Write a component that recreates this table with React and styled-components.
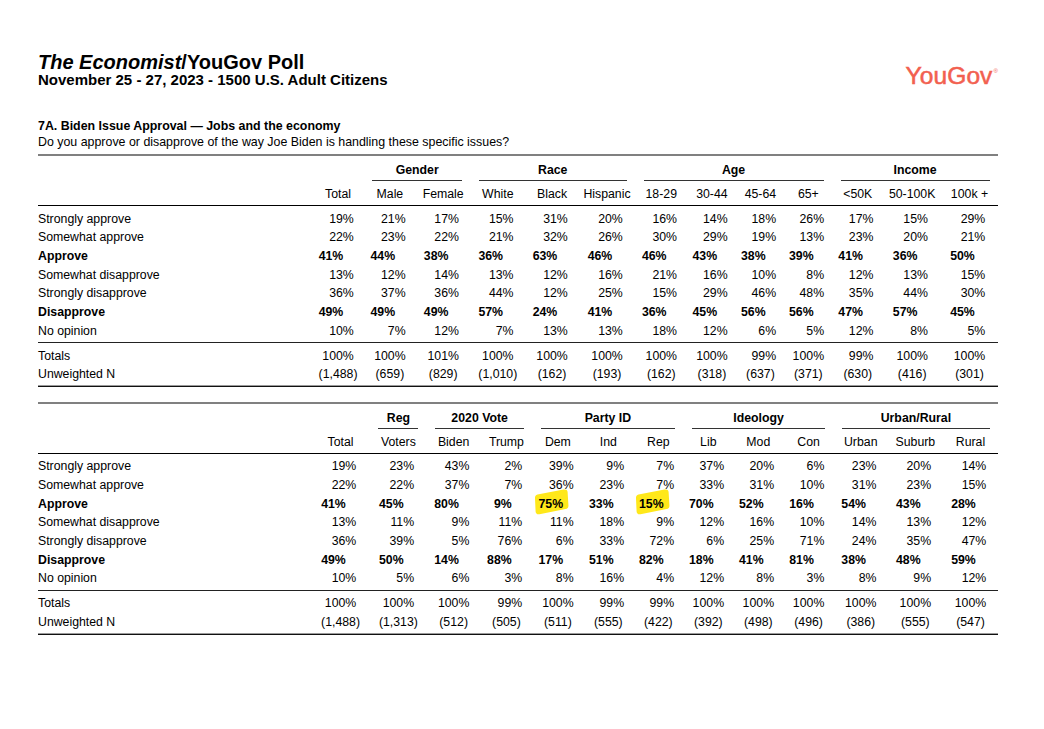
import React from 'react';
import styled, { createGlobalStyle, css } from 'styled-components';

const GlobalStyle = createGlobalStyle`
  html, body { margin: 0; padding: 0; background: #fff; }
  body { font-family: "Liberation Sans", Arial, Helvetica, sans-serif; color: #000; }
`;

const Page = styled.div`
  width: 1044px;
  height: 729px;
  box-sizing: border-box;
  padding: 52px 46px 0 38px;
  isolation: isolate;
  overflow: hidden;
`;

const Header = styled.header`
  display: flex;
  justify-content: space-between;
  align-items: flex-start;
`;

const Title = styled.h1`
  margin: 0;
  font-size: 20px;
  line-height: 20px;
  font-weight: 700;
  white-space: nowrap;
`;

const Subtitle = styled.div`
  font-size: 15px;
  line-height: 15px;
  font-weight: 700;
  white-space: nowrap;
`;

const Logo = styled.div`
  display: flex;
  align-items: flex-start;
  margin-top: 12px;
  color: #f2604f;
  font-size: 24.5px;
  line-height: 23px;
  letter-spacing: 0.1px;
  -webkit-text-stroke: 0.55px #f2604f;
`;

const LogoReg = styled.span`
  font-size: 6px;
  line-height: 6px;
  margin: 4px 0 0 1px;
  -webkit-text-stroke: 0;
`;

const Section = styled.section`
  margin-top: 31px;
`;

const SectionTitle = styled.h2`
  margin: 0;
  font-size: 12.4px;
  line-height: 16px;
  font-weight: 700;
`;

const Question = styled.p`
  margin: 0 0 4px;
  font-size: 12.4px;
  line-height: 16px;
`;

const Grid = styled.div`
  display: grid;
  grid-template-columns: minmax(0, 1fr) ${(p) => p.$widths.map((w) => `${w}px`).join(' ')};
  border-top: 2px solid #808080;
  font-size: 12.3px;
  margin-top: ${(p) => p.$gap || 0}px;
`;

const Blank = styled.div`
  grid-column: span ${(p) => p.$span || 1};
`;

const GroupHead = styled.div`
  grid-column: span ${(p) => p.$span};
  margin: 0 8.5px;
  padding: 5px 0 1px;
  border-bottom: 1px solid #333;
  text-align: center;
  font-weight: 700;
  line-height: 18px;
  white-space: nowrap;
`;

const ColHead = styled.div`
  padding: 4px 0 2px;
  line-height: 18px;
  text-align: center;
  white-space: nowrap;
`;

const Rule = styled.div`
  grid-column: 1 / -1;
  height: 0;
  ${(p) =>
    p.$kind === 'head' &&
    css`
      border-top: 1px solid #000;
      margin-bottom: 3.67px;
    `}
  ${(p) =>
    p.$kind === 'mid' &&
    css`
      border-top: 1px solid #222;
      margin: 1.67px 0 3.67px;
    `}
  ${(p) =>
    p.$kind === 'foot' &&
    css`
      border-top: 1px solid #9a9a9a;
      border-bottom: 1px solid #111;
      margin-top: 1px;
    `}
`;

const Label = styled.div`
  line-height: 18.67px;
  font-weight: ${(p) => (p.$bold ? 700 : 400)};
  white-space: nowrap;
`;

const Cell = styled.div`
  line-height: 18.67px;
  text-align: center;
  white-space: nowrap;
`;

const Num = styled.span`
  position: relative;
  display: inline-block;
  width: 31.5px;
  text-align: right;
  ${(p) =>
    p.$bold &&
    css`
      font-weight: 700;
      margin: 0 10.5px 0 -10.5px;
    `}
`;

const Mark = styled.svg`
  position: absolute;
  left: 2.5px;
  top: -6px;
  z-index: -1;
`;

const Highlight = () => (
  <Mark width="35" height="26" viewBox="0 0 35 26">
    <path
      d="M3.5 5.5 C1.5 6 0.8 7.5 1 9.5 L1.6 22.5 C1.8 24.8 3.2 25.6 5.5 25.2 L31.5 20 C33.8 19.5 34.6 18.3 34.4 16 L33.6 3 C33.3 0.8 31.8 0.2 29.6 0.6 Z"
      fill="#ffe81a"
    />
  </Mark>
);

const ROW_LABELS = [
  ['Strongly approve', false],
  ['Somewhat approve', false],
  ['Approve', true],
  ['Somewhat disapprove', false],
  ['Strongly disapprove', false],
  ['Disapprove', true],
  ['No opinion', false],
];

const table1 = {
  widths: [51.65, 52, 54.65, 54.5, 54, 56, 52.5, 48.75, 48.25, 47.6, 51.25, 57.65, 57],
  groups: [
    ['Gender', 2],
    ['Race', 3],
    ['Age', 4],
    ['Income', 3],
  ],
  cols: ['Total', 'Male', 'Female', 'White', 'Black', 'Hispanic', '18-29', '30-44', '45-64', '65+', '<50K', '50-100K', '100k +'],
  rows: [
    [19, 21, 17, 15, 31, 20, 16, 14, 18, 26, 17, 15, 29],
    [22, 23, 22, 21, 32, 26, 30, 29, 19, 13, 23, 20, 21],
    [41, 44, 38, 36, 63, 46, 46, 43, 38, 39, 41, 36, 50],
    [13, 12, 14, 13, 12, 16, 21, 16, 10, 8, 12, 13, 15],
    [36, 37, 36, 44, 12, 25, 15, 29, 46, 48, 35, 44, 30],
    [49, 49, 49, 57, 24, 41, 36, 45, 56, 56, 47, 57, 45],
    [10, 7, 12, 7, 13, 13, 18, 12, 6, 5, 12, 8, 5],
  ],
  totals: [100, 100, 101, 100, 100, 100, 100, 100, 99, 100, 99, 100, 100],
  n: ['(1,488)', '(659)', '(829)', '(1,010)', '(162)', '(193)', '(162)', '(318)', '(637)', '(371)', '(630)', '(416)', '(301)'],
  marks: [],
};

const table2 = {
  widths: [58.8, 56.9, 53.6, 52, 50.9, 50, 50, 50, 50, 50.5, 53.85, 55.35, 55],
  groups: [
    ['Reg', 1],
    ['2020 Vote', 2],
    ['Party ID', 3],
    ['Ideology', 3],
    ['Urban/Rural', 3],
  ],
  cols: ['Total', 'Voters', 'Biden', 'Trump', 'Dem', 'Ind', 'Rep', 'Lib', 'Mod', 'Con', 'Urban', 'Suburb', 'Rural'],
  rows: [
    [19, 23, 43, 2, 39, 9, 7, 37, 20, 6, 23, 20, 14],
    [22, 22, 37, 7, 36, 23, 7, 33, 31, 10, 31, 23, 15],
    [41, 45, 80, 9, 75, 33, 15, 70, 52, 16, 54, 43, 28],
    [13, 11, 9, 11, 11, 18, 9, 12, 16, 10, 14, 13, 12],
    [36, 39, 5, 76, 6, 33, 72, 6, 25, 71, 24, 35, 47],
    [49, 50, 14, 88, 17, 51, 82, 18, 41, 81, 38, 48, 59],
    [10, 5, 6, 3, 8, 16, 4, 12, 8, 3, 8, 9, 12],
  ],
  totals: [100, 100, 100, 99, 100, 99, 99, 100, 100, 100, 100, 100, 100],
  n: ['(1,488)', '(1,313)', '(512)', '(505)', '(511)', '(555)', '(422)', '(392)', '(498)', '(496)', '(386)', '(555)', '(547)'],
  marks: ['2-4', '2-6'],
};

const PollTable = ({ data, gap }) => (
  <Grid $widths={data.widths} $gap={gap}>
    <Blank $span={2} />
    {data.groups.map(([name, span]) => (
      <GroupHead key={name} $span={span}>
        {name}
      </GroupHead>
    ))}
    <Blank />
    {data.cols.map((c) => (
      <ColHead key={c}>{c}</ColHead>
    ))}
    <Rule $kind="head" />
    {data.rows.map((row, ri) => {
      const [label, bold] = ROW_LABELS[ri];
      return (
        <React.Fragment key={label}>
          <Label $bold={bold}>{label}</Label>
          {row.map((v, ci) => (
            <Cell key={ci}>
              <Num $bold={bold}>
                {data.marks.includes(`${ri}-${ci}`) && <Highlight />}
                {v}%
              </Num>
            </Cell>
          ))}
        </React.Fragment>
      );
    })}
    <Rule $kind="mid" />
    <Label>Totals</Label>
    {data.totals.map((v, ci) => (
      <Cell key={ci}>
        <Num>{v}%</Num>
      </Cell>
    ))}
    <Label>Unweighted N</Label>
    {data.n.map((v, ci) => (
      <Cell key={ci}>{v}</Cell>
    ))}
    <Rule $kind="foot" />
  </Grid>
);

export default function App() {
  return (
    <Page>
      <GlobalStyle />
      <Header>
        <div>
          <Title>
            <i>The Economist</i>/YouGov Poll
          </Title>
          <Subtitle>November 25 - 27, 2023 - 1500 U.S. Adult Citizens</Subtitle>
        </div>
        <Logo>
          YouGov<LogoReg>®</LogoReg>
        </Logo>
      </Header>
      <Section>
        <SectionTitle>7A. Biden Issue Approval — Jobs and the economy</SectionTitle>
        <Question>Do you approve or disapprove of the way Joe Biden is handling these specific issues?</Question>
        <PollTable data={table1} />
        <PollTable data={table2} gap={14.5} />
      </Section>
    </Page>
  );
}
